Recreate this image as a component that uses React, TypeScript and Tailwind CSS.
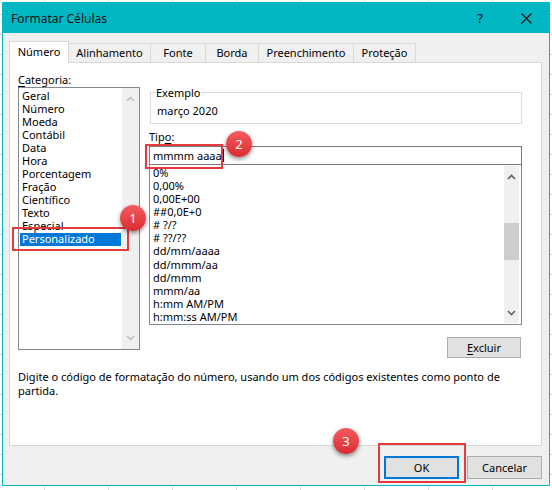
import React from 'react';

const categories = [
  'Geral',
  'Número',
  'Moeda',
  'Contábil',
  'Data',
  'Hora',
  'Porcentagem',
  'Fração',
  'Científico',
  'Texto',
  'Especial',
  'Personalizado',
];

const formats = [
  '0%',
  '0,00%',
  '0,00E+00',
  '##0,0E+0',
  '# ?/?',
  '# ??/??',
  'dd/mm/aaaa',
  'dd/mmm/aa',
  'dd/mmm',
  'mmm/aa',
  'h:mm AM/PM',
  'h:mm:ss AM/PM',
];

const tabs = [
  { label: 'Alinhamento', w: 'w-[82px]' },
  { label: 'Fonte', w: 'w-[55px]' },
  { label: 'Borda', w: 'w-[53px]' },
  { label: 'Preenchimento', w: 'w-[95px]' },
  { label: 'Proteção', w: 'w-[62px]' },
];

function Chevron({ up, dim }: { up?: boolean; dim?: boolean }) {
  return (
    <svg width="9" height="6" viewBox="0 0 9 6" className="shrink-0">
      <path
        d={up ? 'M1 5 L4.5 1.5 L8 5' : 'M1 1 L4.5 4.5 L8 1'}
        fill="none"
        stroke={dim ? '#c2c2c2' : '#606060'}
        strokeWidth="1.6"
      />
    </svg>
  );
}

function Badge({ n, className }: { n: number; className: string }) {
  return (
    <div
      className={`absolute flex h-[26px] w-[26px] items-center justify-center rounded-full bg-linear-to-b from-[#f45a5f] to-[#d92a30] text-[13px] text-white shadow-[0_2px_4px_rgba(0,0,0,0.45)] ${className}`}
    >
      {n}
    </div>
  );
}

export default function App() {
  return (
    <div className="relative h-[490px] w-[552px] overflow-hidden bg-white bg-[linear-gradient(to_right,#d9d9d9_1px,transparent_1px),linear-gradient(to_bottom,#d9d9d9_1px,transparent_1px)] bg-[size:64px_20px] bg-[position:44px_14px] font-['Noto_Sans',sans-serif] text-[11px] leading-[13px] text-black">
      <div className="ml-[2px] mt-[2px] flex h-[484px] w-[548px] flex-col border border-[#00b7c3] bg-[#f0f0f0]">
        {/* title bar */}
        <div className="flex h-[30px] items-center bg-[#00b7c3] pl-[8px] pr-[17px]">
          <span className="text-[12px] text-[#111]">Formatar Células</span>
          <span className="ml-auto mr-[38px] text-[13px]">?</span>
          <svg width="11" height="11" viewBox="0 0 11 11">
            <path d="M0.5 0.5 L10.5 10.5 M10.5 0.5 L0.5 10.5" stroke="#111" strokeWidth="1.1" />
          </svg>
        </div>

        <div className="flex flex-1 flex-col px-[6px]">
          {/* tabs */}
          <div className="mt-[7px] flex h-[22px] items-end">
            <div className="relative z-10 -mb-px flex h-[22px] w-[60px] items-center justify-center border border-b-0 border-[#d9d9d9] bg-white pb-[2px]">
              Número
            </div>
            {tabs.map((t) => (
              <div
                key={t.label}
                className={`flex h-[19px] ${t.w} items-center justify-center border border-l-0 border-b-0 border-[#d9d9d9] bg-[#f0f0f0] pb-px`}
              >
                {t.label}
              </div>
            ))}
          </div>

          {/* panel */}
          <div className="flex h-[384px] w-[533px] flex-col border border-[#d9d9d9] bg-white pl-[8px] pt-[10px]">
            <div className="flex">
              {/* left column */}
              <div className="flex w-[122px] flex-col">
                <div>
                  <span className="underline underline-offset-2">C</span>ategoria:
                </div>
                <div className="mt-[1px] flex h-[263px] border border-[#828790]">
                  <div className="flex flex-1 flex-col p-px pt-[2px]">
                    {categories.map((c) => (
                      <div
                        key={c}
                        className={`h-[13px] pl-[2px] leading-[12px] ${
                          c === 'Personalizado' ? 'bg-[#0078d7] text-white' : ''
                        }`}
                      >
                        {c}
                      </div>
                    ))}
                  </div>
                  <div className="flex w-[17px] flex-col items-center justify-between bg-[#f0f0f0] py-[8px]">
                    <Chevron up dim />
                    <Chevron dim />
                  </div>
                </div>
              </div>

              {/* right column */}
              <div className="ml-[9px] flex w-[373px] flex-col">
                <fieldset className="ml-px mt-[13px] h-[38px] border border-[#dcdcdc] px-[4px]">
                  <legend className="px-[1px] leading-[13px]">Exemplo</legend>
                  <div className="mt-[5px] pl-[2px]">março 2020</div>
                </fieldset>
                <div className="mt-[6px]">
                  Tip<span className="underline underline-offset-2">o</span>:
                </div>
                <div className="mt-[3px] flex h-[19px] items-center border border-[#7a7a7a] pb-px pl-[3px]">
                  <span>mmmm aaaa</span>
                  <span className="ml-px h-[13px] w-px bg-black" />
                </div>
                <div className="flex h-[160px] border border-t-0 border-[#828790]">
                  <div className="flex flex-1 flex-col pl-[3px] pt-[2px]">
                    {formats.map((f) => (
                      <div key={f} className="h-[13.1px] leading-[12px]">
                        {f}
                      </div>
                    ))}
                  </div>
                  <div className="my-px mr-[2px] flex w-[15px] flex-col items-center bg-[#f0f0f0] pb-[7px] pt-[8px]">
                    <Chevron up />
                    <div className="mt-[43px] h-[37px] w-[15px] bg-[#cdcdcd]" />
                    <div className="flex-1" />
                    <Chevron />
                  </div>
                </div>
                <div className="mr-px mt-[12px] flex h-[21px] w-[74px] items-center justify-center self-end border border-[#adadad] bg-[#e1e1e1]">
                  <span>
                    <span className="underline underline-offset-2">E</span>xcluir
                  </span>
                </div>
              </div>
            </div>

            <p className="mt-[12px] w-[500px] leading-[14px]">
              Digite o código de formatação do número, usando um dos códigos existentes como ponto de partida.
            </p>
          </div>

          {/* buttons */}
          <div className="mt-[10px] flex justify-end gap-[8px] pr-px">
            <div className="flex h-[23px] w-[75px] items-center justify-center border-2 border-[#0078d7] bg-[#e1e1e1]">
              OK
            </div>
            <div className="flex h-[23px] w-[75px] items-center justify-center border border-[#adadad] bg-[#e1e1e1]">
              Cancelar
            </div>
          </div>
        </div>
      </div>

      {/* annotations */}
      <div className="absolute left-[12px] top-[227px] h-[24px] w-[117px] border-2 border-[#e63a3f]" />
      <div className="absolute left-[145px] top-[144px] h-[25px] w-[78px] border-2 border-[#e63a3f]" />
      <div className="absolute left-[378px] top-[443px] h-[40px] w-[88px] border-2 border-[#e63a3f]" />
      <Badge n={1} className="left-[120px] top-[205px]" />
      <Badge n={2} className="left-[226px] top-[131px]" />
      <Badge n={3} className="left-[333px] top-[428px]" />
    </div>
  );
}
